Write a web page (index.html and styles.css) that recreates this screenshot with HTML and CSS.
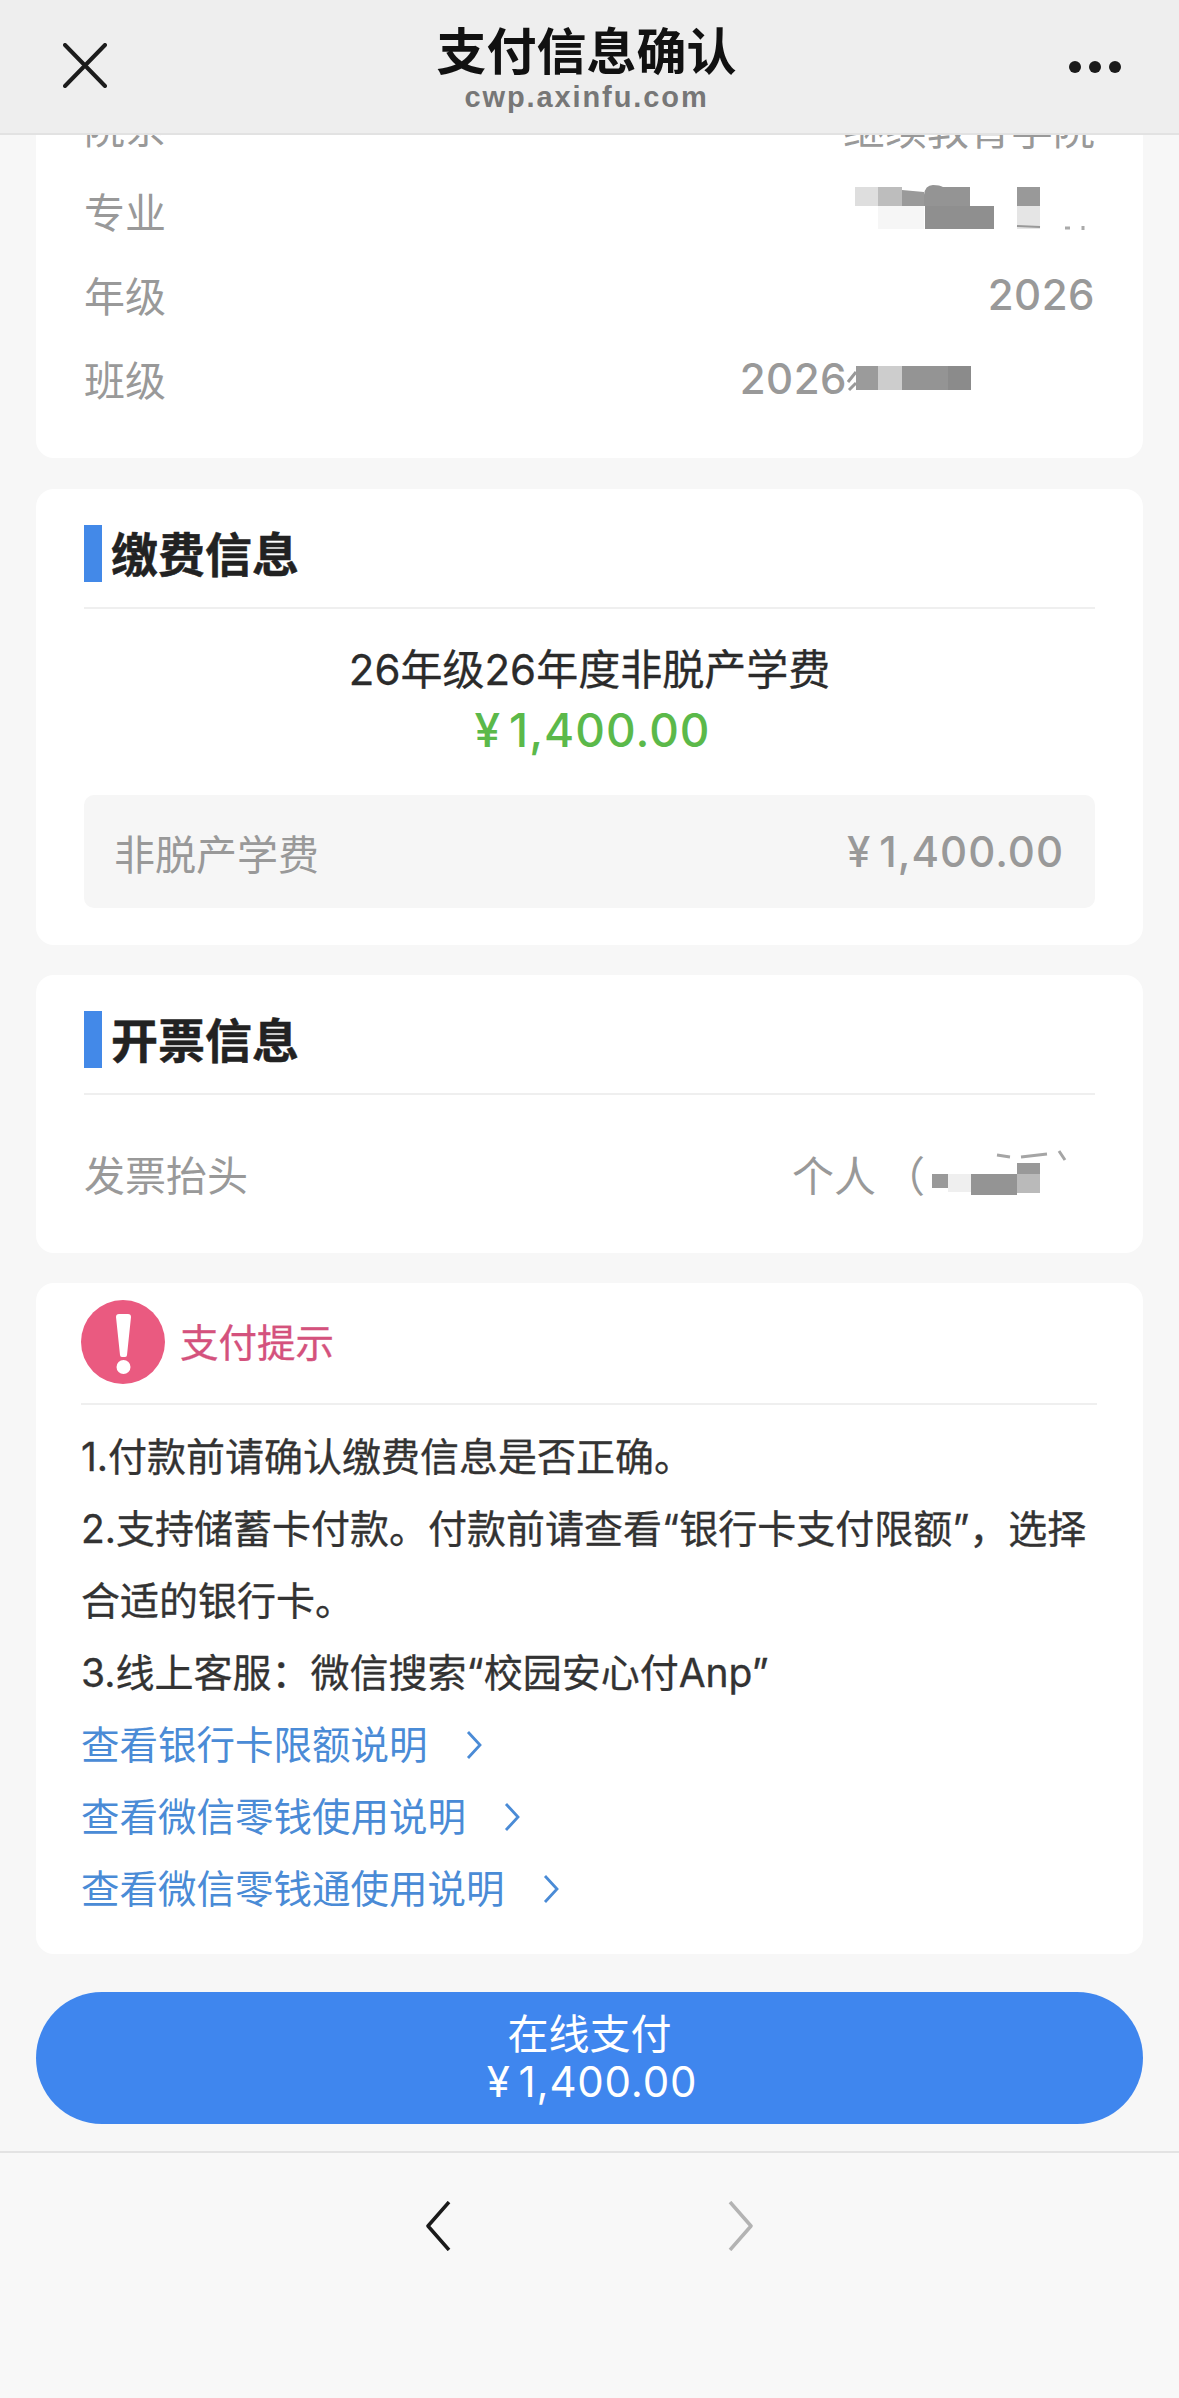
FILE: index.html
```html
<!DOCTYPE html>
<html lang="zh-CN">
<head>
<meta charset="utf-8">
<title>支付信息确认</title>
<link rel="stylesheet" href="styles.css">
</head>
<body>
<header class="topbar">
  <svg class="close" viewBox="0 0 44 45"><path d="M2 2 L42 43 M42 2 L2 43"/></svg>
  <div class="topbar-titles">
    <div class="topbar-title">支付信息确认</div>
    <div class="topbar-url">cwp.axinfu.com</div>
  </div>
  <div class="dots"><i></i><i></i><i></i></div>
</header>

<main class="page">
  <section class="card card-info">
    <div class="row"><span>院系</span><span class="value">继续教育学院</span></div>
    <div class="row"><span>专业</span>
      <svg class="mosaic" width="237" height="84" viewBox="0 0 237 84">
        <rect x="0" y="19" width="23" height="19" fill="#dedede"/>
        <rect x="23" y="19" width="24" height="19" fill="#bdbdbd"/>
        <path d="M47 22 L69 24 L70 38 L47 38Z" fill="#9a9a9a"/>
        <path d="M69 27 Q70 17 78 17 Q85 17 88 19 L115 19 L115 38 L69 38Z" fill="#949494"/>
        <rect x="23" y="38" width="46" height="23" fill="#f6f6f6"/>
        <rect x="70" y="38" width="69" height="23" fill="#8f8f8f"/>
        <rect x="162" y="19" width="23" height="19" fill="#999"/>
        <rect x="162" y="38" width="23" height="23" fill="#e5e5e5"/>
        <path d="M162 58 L185 59" stroke="#999" stroke-width="2"/>
        <path d="M210 60h5M228 58v4" stroke="#aaa" stroke-width="3"/>
      </svg>
    </div>
    <div class="row"><span>年级</span><span class="value-num">2026</span></div>
    <div class="row"><span>班级</span>
      <span class="value-mixed"><span class="value-num">2026</span>
        <svg class="mosaic" width="245" height="84" viewBox="6 0 245 84">
          <path d="M7 46 L15 36 M8 54 L15 47" stroke="#999" stroke-width="3"/>
          <rect x="15" y="30" width="23" height="24" fill="#9b9b9b"/>
          <rect x="37" y="30" width="24" height="24" fill="#cdcdcd"/>
          <rect x="61" y="30" width="46" height="24" fill="#949494"/>
          <rect x="107" y="30" width="23" height="24" fill="#8b8b8b"/>
        </svg>
      </span>
    </div>
  </section>

  <section class="card card-fee">
    <h2 class="section-head">缴费信息</h2>
    <div class="fee-name">26年级26年度非脱产学费</div>
    <div class="fee-total"><span class="yen">¥</span>1,400.00</div>
    <div class="fee-row"><span>非脱产学费</span><span class="money"><span class="yen">¥</span>1,400.00</span></div>
  </section>

  <section class="card card-invoice">
    <h2 class="section-head">开票信息</h2>
    <div class="row row-invoice"><span>发票抬头</span>
      <span class="value-mixed"><span class="value">个人</span><span class="value paren">（</span>
        <svg class="mosaic" width="167" height="84" viewBox="0 0 167 84">
          <rect x="7" y="43" width="16" height="14" fill="#999"/>
          <rect x="23" y="43" width="23" height="18" fill="#efefef"/>
          <rect x="46" y="43" width="46" height="21" fill="#949494"/>
          <rect x="92" y="32" width="23" height="11" fill="#999"/>
          <rect x="92" y="43" width="23" height="19" fill="#bababa"/>
          <path d="M72 24 L85 26 M96 26 L122 23 M134 20 L140 29" stroke="#a5a5a5" stroke-width="3"/>
        </svg>
      </span>
    </div>
  </section>

  <section class="card card-tips">
    <div class="tips-head">
      <svg class="alert" viewBox="0 0 84 84">
        <circle cx="42" cy="42" r="42" fill="#ea5a80"/>
        <path d="M35 17 Q35 14 38 14 L47 14 Q50 14 50 17 L46 55 Q46 57 44 57 L41 57 Q39 57 39 55Z" fill="#fff"/>
        <circle cx="42.500" cy="67" r="7" fill="#fff"/>
      </svg>
      <span class="tips-title">支付提示</span>
    </div>
    <div class="tips-body">
      <p>1.付款前请确认缴费信息是否正确。</p>
      <p>2.支持储蓄卡付款。付款前请查看“银行卡支付限额”，选择合适的银行卡。</p>
      <p>3.线上客服：微信搜索“校园安心付Anp”</p>
      <a class="tip-link">查看银行卡限额说明<svg class="tip-chev" viewBox="0 0 16 28"><path d="M2 1 L14 14 L2 27"/></svg></a>
      <a class="tip-link">查看微信零钱使用说明<svg class="tip-chev" viewBox="0 0 16 28"><path d="M2 1 L14 14 L2 27"/></svg></a>
      <a class="tip-link">查看微信零钱通使用说明<svg class="tip-chev" viewBox="0 0 16 28"><path d="M2 1 L14 14 L2 27"/></svg></a>
    </div>
  </section>

  <button class="pay-btn" type="button"><span>在线支付</span><span class="money money-btn"><span class="yen">¥</span>1,400.00</span></button>
</main>

<footer class="toolbar">
  <svg class="nav-chev nav-back" viewBox="0 0 26 50"><path d="M24 1 L3 25 L24 49"/></svg>
  <svg class="nav-chev nav-forward" viewBox="0 0 26 50"><path d="M2 1 L23 25 L2 49"/></svg>
</footer>
</body>
</html>
```

FILE: styles.css
```css
* { box-sizing: border-box; }
html, body { margin: 0; padding: 0; }
body {
  width: 1179px;
  height: 2398px;
  overflow: hidden;
  background: #f7f7f7;
  font-family: Inter, "Noto Sans CJK SC", sans-serif;
  color: #333;
}

.topbar {
  position: relative;
  z-index: 2;
  height: 135px;
  padding: 0 57px 0 63px;
  display: flex;
  align-items: center;
  justify-content: space-between;
  background: #eeeeee;
  border-bottom: 2px solid #e2e2e2;
}
.close { width: 44px; height: 45px; margin-top: -2px; flex: none; }
.close path { fill: none; stroke: #1c1c1c; stroke-width: 4; stroke-linecap: round; }
.topbar-titles {
  position: absolute;
  left: 0;
  right: 6px;
  top: 20px;
  text-align: center;
}
.topbar-title {
  font-family: "Noto Sans CJK SC", sans-serif;
  font-size: 50px;
  font-weight: 700;
  line-height: 56px;
  color: #111;
}
.topbar-url {
  margin-top: 4px;
  font-family: "Liberation Sans", sans-serif;
  font-size: 29px;
  font-weight: 700;
  letter-spacing: 1.900px;
  line-height: 34px;
  color: #777;
}
.dots { display: flex; gap: 8px; margin-right: 1px; }
.dots i { width: 12px; height: 12px; border-radius: 50%; background: #1a1a1a; }

.page { padding: 0 36px; }
.card {
  background: #fff;
  border-radius: 18px;
  padding-left: 48px;
  padding-right: 48px;
  margin-bottom: 30px;
}
.card-info { margin-top: -51px; height: 374px; margin-bottom: 31px; }
.row {
  height: 84px;
  display: flex;
  align-items: center;
  justify-content: space-between;
  font-size: 41px;
  color: #999;
}
.value { font-size: 42px; }
.value-num { font-size: 42px; letter-spacing: 0.500px; font-weight: 500; }
.mosaic { display: block; flex: none; margin-right: 3px; }
.value-mixed { display: flex; align-items: center; }
.paren { margin-left: 7px; }

.section-head {
  margin: 0;
  padding: 34px 0 25px 27px;
  height: 120px;
  position: relative;
  font-family: "Noto Sans CJK SC", sans-serif;
  font-size: 47px;
  font-weight: 700;
  line-height: 57px;
  color: #222;
  -webkit-text-stroke: 0.500px #222;
  border-bottom: 2px solid #efefef;
}
.section-head::before {
  content: "";
  position: absolute;
  left: 0;
  top: 36px;
  width: 18px;
  height: 57px;
  background: #4389e8;
}

.fee-name {
  margin-top: 31px;
  text-align: center;
  font-size: 42px;
  line-height: 60px;
  color: #2b2b2b;
  -webkit-text-stroke: 0.300px #2b2b2b;
}
.fee-total {
  padding-left: 6px;
  text-align: center;
  font-size: 46px;
  font-weight: 500;
  letter-spacing: 1px;
  line-height: 60px;
  color: #5bb94a;
}
.yen { margin-right: 8px; }
.money { font-size: 42px; letter-spacing: 1px; font-weight: 500; }
.money-btn { padding-left: 5px; letter-spacing: 0.800px; font-weight: 400; }
.fee-row {
  margin-top: 35px;
  height: 113px;
  padding: 0 31px 0 30px;
  display: flex;
  align-items: center;
  justify-content: space-between;
  border-radius: 10px;
  background: #f6f6f6;
  font-size: 41px;
  color: #999;
}
.card-fee { padding-bottom: 37px; }

.row-invoice { margin-top: 36px; }
.card-invoice { padding-bottom: 38px; }

.card-tips { padding: 17px 46px 29px 45px; margin-bottom: 38px; }
.tips-head {
  display: flex;
  align-items: center;
  gap: 15px;
  padding-bottom: 19px;
  border-bottom: 2px solid #efefef;
}
.alert { width: 84px; height: 84px; flex: none; }
.tips-title { font-size: 38.500px; color: #d4527d; margin-top: -4px; -webkit-text-stroke: 0.300px #d4527d; }
.tips-body { margin-top: 16px; font-size: 39px; line-height: 72px; color: #333; }
.tips-body p { margin: 0; -webkit-text-stroke: 0.300px #333; }
.tip-link { display: flex; align-items: center; color: #4a8bd6; font-size: 38.500px; }
.tip-chev { width: 16px; height: 28px; margin-left: 38px; flex: none; }
.tip-chev path { fill: none; stroke: #4a8bd6; stroke-width: 2.800; }

.pay-btn {
  display: flex;
  flex-direction: column;
  align-items: center;
  justify-content: center;
  width: 100%;
  height: 132px;
  border: 0;
  border-radius: 66px;
  background: #3f86ee;
  color: #fff;
  font-family: inherit;
  font-size: 41px;
  line-height: 47px;
}

.toolbar {
  margin-top: 27px;
  height: 247px;
  padding-top: 48px;
  display: flex;
  justify-content: center;
  align-items: flex-start;
  gap: 277px;
  background: #f8f8f8;
  border-top: 2px solid #e3e3e3;
}
.nav-chev { width: 26px; height: 50px; flex: none; }
.nav-chev path { fill: none; stroke-width: 3.500; stroke-linejoin: round; }
.nav-back path { stroke: #1a1a1a; }
.nav-forward path { stroke: #b3b3b3; }
```
